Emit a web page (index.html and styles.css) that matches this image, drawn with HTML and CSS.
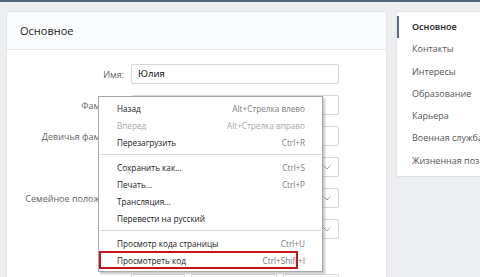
FILE: index.html
```html
<!DOCTYPE html>
<html lang="ru">
<head>
<meta charset="utf-8">
<link rel="stylesheet" href="styles.css">
</head>
<body>
<div class="topbar"></div>
<div class="page">
  <div class="main">
    <div class="main-head">Основное</div>
    <div class="form">
      <div class="row"><div class="label">Имя:</div><div class="field">Юлия</div></div>
      <div class="row"><div class="label">Фамилия:</div><div class="field"></div></div>
      <div class="row"><div class="label">Девичья фамилия:</div><div class="field"></div></div>
      <div class="row"><div class="label">Пол:</div><div class="field select"><svg class="chev" viewBox="0 0 8 5" width="8" height="5"><polyline points="0.5,0.5 4,4 7.5,0.5" fill="none" stroke="#8b9bb0" stroke-width="0.9"/></svg></div></div>
      <div class="row"><div class="label">Семейное положение:</div><div class="field select"><svg class="chev" viewBox="0 0 8 5" width="8" height="5"><polyline points="0.5,0.5 4,4 7.5,0.5" fill="none" stroke="#8b9bb0" stroke-width="0.9"/></svg></div></div>
      <div class="row"><div class="label">Пол:</div><div class="field select"><svg class="chev" viewBox="0 0 8 5" width="8" height="5"><polyline points="0.5,0.5 4,4 7.5,0.5" fill="none" stroke="#8b9bb0" stroke-width="0.9"/></svg></div></div>
      <div class="row date-row"><div class="label"></div><div class="dates"><div class="field d1"></div><div class="field d2"></div><div class="field d3"></div></div></div>
    </div>
  </div>
  <div class="nav">
    <div class="nav-item active">Основное</div>
    <div class="nav-item">Контакты</div>
    <div class="nav-item">Интересы</div>
    <div class="nav-item">Образование</div>
    <div class="nav-item">Карьера</div>
    <div class="nav-item">Военная служба</div>
    <div class="nav-item">Жизненная позиция</div>
  </div>
</div>

<div class="menu">
  <div class="mi"><span>Назад</span><span class="sc">Alt+Стрелка влево</span></div>
  <div class="mi disabled"><span>Вперед</span><span class="sc">Alt+Стрелка вправо</span></div>
  <div class="mi"><span>Перезагрузить</span><span class="sc">Ctrl+R</span></div>
  <div class="sep"></div>
  <div class="mi"><span>Сохранить как...</span><span class="sc">Ctrl+S</span></div>
  <div class="mi"><span>Печать...</span><span class="sc">Ctrl+P</span></div>
  <div class="mi"><span>Трансляция...</span></div>
  <div class="mi"><span>Перевести на русский</span></div>
  <div class="sep"></div>
  <div class="mi"><span>Просмотр кода страницы</span><span class="sc">Ctrl+U</span></div>
  <div class="mi"><span>Просмотреть код</span><span class="sc">Ctrl+Shift+I</span></div>
</div>
<div class="highlight"></div>
</body>
</html>
```
FILE: styles.css
```css
html, body {
  margin: 0;
  padding: 0;
  width: 480px;
  height: 277px;
  overflow: hidden;
  background: #edeef0;
  font-family: "Open Sans", "Noto Sans", sans-serif;
}
.topbar {
  height: 2px;
  background: #55677f;
}
.page {
  display: flex;
  align-items: flex-start;
  gap: 11px;
  padding: 10px 0 0 7px;
}
.main {
  width: 379px;
  height: 300px;
  background: #fff;
  border-radius: 2px;
  box-shadow: 0 1px 0 #dcdee2, 0 0 0 1px #e3e4e8;
  flex-shrink: 0;
}
.main-head {
  height: 37px;
  line-height: 37px;
  padding-left: 13px;
  background: #fafbfc;
  border-bottom: 1px solid #e7e8ec;
  font-size: 11px;
  color: #222;
  border-radius: 2px 2px 0 0;
}
.form {
  padding-top: 14px;
  display: flex;
  flex-direction: column;
  gap: 11px;
}
.row {
  display: flex;
  align-items: center;
  gap: 7px;
}
.label {
  width: 117px;
  text-align: right;
  font-size: 9px;
  color: #656565;
  white-space: nowrap;
}
.field {
  box-sizing: border-box;
  width: 208px;
  height: 20px;
  border: 1px solid #d3d9de;
  border-radius: 2px;
  font-size: 9.5px;
  line-height: 18px;
  padding-left: 6px;
  color: #000;
  background: #fff;
  display: flex;
  align-items: center;
}
.select {
  justify-content: flex-end;
  padding-right: 7px;
}
.date-row {
  margin-top: 24px;
}
.dates {
  display: flex;
  gap: 6px;
}
.dates .field.d1 { width: 54px; }
.dates .field.d2 { width: 86px; }
.dates .field.d3 { width: 56px; }

.nav {
  width: 110px;
  flex-shrink: 0;
  background: #fff;
  border-radius: 2px;
  box-shadow: 0 1px 0 #dcdee2, 0 0 0 1px #e3e4e8;
  padding: 4px 0;
}
.nav-item {
  height: 22.3px;
  line-height: 22px;
  padding-left: 13px;
  font-size: 9px;
  color: #555;
  white-space: nowrap;
  border-left: 2px solid transparent;
}
.nav-item.active {
  border-left-color: #5b6d85;
  color: #222;
  font-weight: 600;
}

.menu {
  position: absolute;
  left: 98px;
  top: 96px;
  width: 223px;
  padding: 3px 0 2px;
  background: #fff;
  border: 1px solid #a9a9a9;
  box-shadow: 2px 2px 2px rgba(0, 0, 0, 0.22);
  font-family: "Open Sans", "Noto Sans", sans-serif;
}
.mi {
  height: 17px;
  display: flex;
  align-items: center;
  justify-content: space-between;
  padding: 0 17px 0 18px;
  font-size: 8.2px;
  color: #222;
  white-space: nowrap;
}
.mi .sc {
  color: #7a7a7a;
}
.mi.disabled, .mi.disabled .sc {
  color: #a8a8a8;
}
.sep {
  height: 1px;
  margin: 3px 1px 4px;
  background: #dadada;
}
.highlight {
  position: absolute;
  left: 99px;
  top: 251px;
  width: 195px;
  height: 14px;
  border: 2px solid #c3161e;
}
```
